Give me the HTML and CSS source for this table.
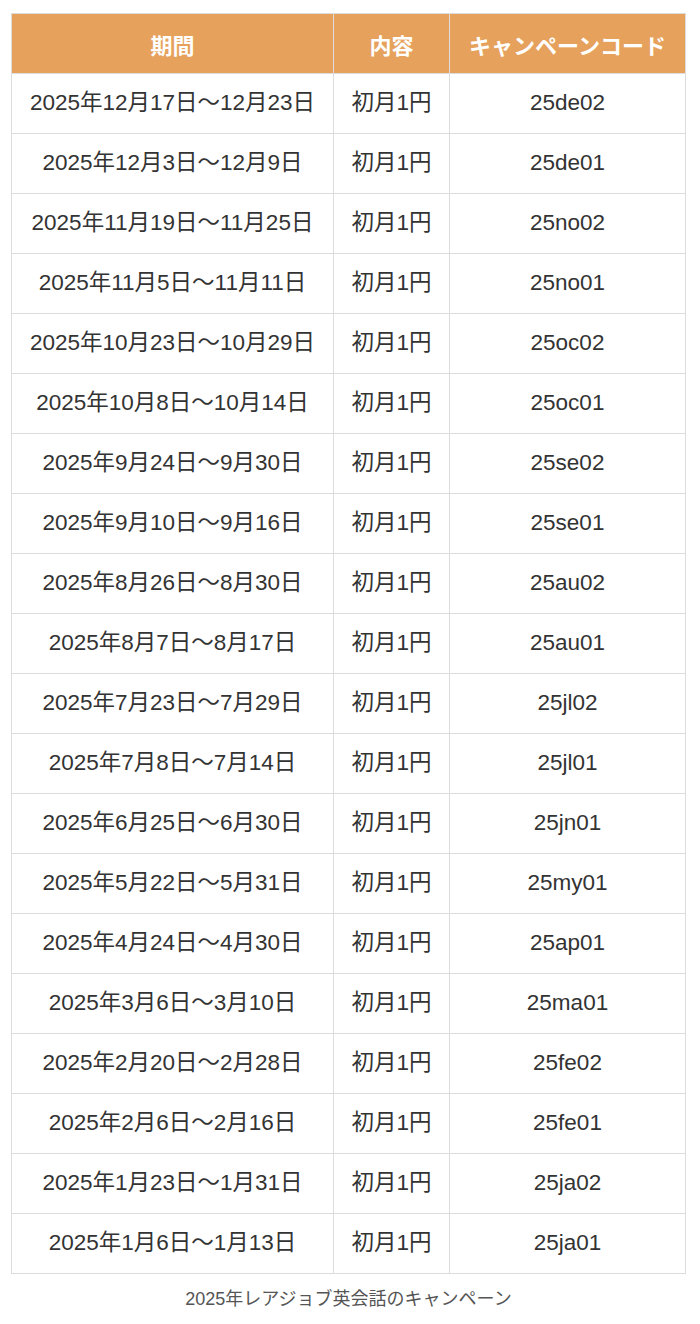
FILE: index.html
```html
<!DOCTYPE html>
<html lang="ja">
<head>
<meta charset="utf-8">
<link rel="stylesheet" href="styles.css">
</head>
<body>
<div class="wrap">
<table class="campaign">
<thead>
<tr><th class="c1">期間</th><th class="c2">内容</th><th class="c3">キャンペーンコード</th></tr>
</thead>
<tbody>
<tr><td>2025年12月17日～12月23日</td><td>初月1円</td><td>25de02</td></tr>
<tr><td>2025年12月3日～12月9日</td><td>初月1円</td><td>25de01</td></tr>
<tr><td>2025年11月19日～11月25日</td><td>初月1円</td><td>25no02</td></tr>
<tr><td>2025年11月5日～11月11日</td><td>初月1円</td><td>25no01</td></tr>
<tr><td>2025年10月23日～10月29日</td><td>初月1円</td><td>25oc02</td></tr>
<tr><td>2025年10月8日～10月14日</td><td>初月1円</td><td>25oc01</td></tr>
<tr><td>2025年9月24日～9月30日</td><td>初月1円</td><td>25se02</td></tr>
<tr><td>2025年9月10日～9月16日</td><td>初月1円</td><td>25se01</td></tr>
<tr><td>2025年8月26日～8月30日</td><td>初月1円</td><td>25au02</td></tr>
<tr><td>2025年8月7日～8月17日</td><td>初月1円</td><td>25au01</td></tr>
<tr><td>2025年7月23日～7月29日</td><td>初月1円</td><td>25jl02</td></tr>
<tr><td>2025年7月8日～7月14日</td><td>初月1円</td><td>25jl01</td></tr>
<tr><td>2025年6月25日～6月30日</td><td>初月1円</td><td>25jn01</td></tr>
<tr><td>2025年5月22日～5月31日</td><td>初月1円</td><td>25my01</td></tr>
<tr><td>2025年4月24日～4月30日</td><td>初月1円</td><td>25ap01</td></tr>
<tr><td>2025年3月6日～3月10日</td><td>初月1円</td><td>25ma01</td></tr>
<tr><td>2025年2月20日～2月28日</td><td>初月1円</td><td>25fe02</td></tr>
<tr><td>2025年2月6日～2月16日</td><td>初月1円</td><td>25fe01</td></tr>
<tr><td>2025年1月23日～1月31日</td><td>初月1円</td><td>25ja02</td></tr>
<tr><td>2025年1月6日～1月13日</td><td>初月1円</td><td>25ja01</td></tr>
</tbody>
</table>
<p class="caption">2025年レアジョブ英会話のキャンペーン</p>
</div>
</body>
</html>
```
FILE: styles.css
```css
html, body {
  margin: 0;
  padding: 0;
  background: #fff;
}
body {
  font-family: "Liberation Sans", "Noto Sans CJK JP", sans-serif;
  color: #333;
}
.wrap {
  padding: 13px 14px 0 11px;
}
.campaign {
  width: 675px;
  border-collapse: collapse;
  table-layout: fixed;
}
.campaign th,
.campaign td {
  border: 1px solid #dcdcdc;
  height: 59px;
  padding: 0 4px;
  text-align: center;
  vertical-align: middle;
  font-size: 22.5px;
  line-height: 1;
  white-space: nowrap;
}
.campaign th {
  background: #e6a25d;
  color: #fff;
  font-weight: bold;
  font-size: 22px;
  font-family: "Noto Sans CJK JP", sans-serif;
}
.campaign td {
  color: #333;
}
.c1 { width: 313px; }
.c2 { width: 107px; }
.c3 { width: auto; }
.caption {
  margin: 10px 0 0;
  width: 675px;
  text-align: center;
  font-size: 18px;
  color: #555;
}
```
